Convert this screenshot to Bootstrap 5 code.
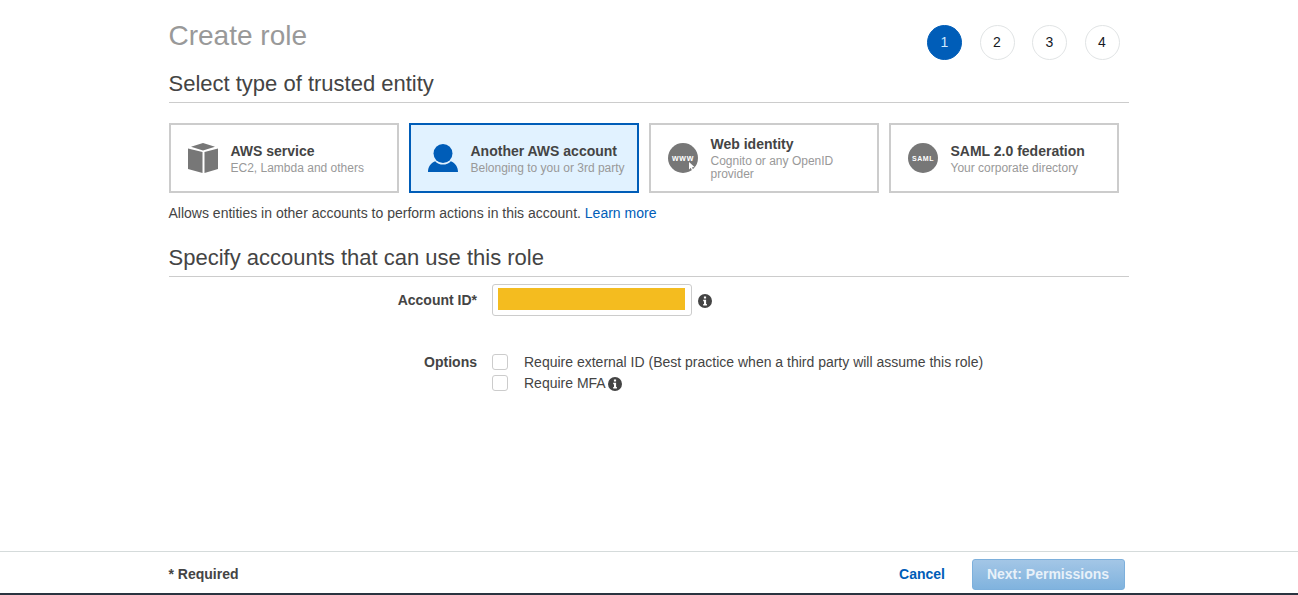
<!DOCTYPE html>
<html lang="en">
<head>
<meta charset="utf-8">
<title>Create role</title>
<link href="https://cdn.jsdelivr.net/npm/bootstrap@5.3.0/dist/css/bootstrap.min.css" rel="stylesheet">
<style>
html,body{height:100%}
body{font-family:"Liberation Sans",Arial,sans-serif;font-size:14px;color:#444;overflow:hidden;background:#fff}
.pg{height:595px}
.wrap{width:960px;margin:0 0 0 168.5px}
.hdr{height:70px;padding-top:16px}
.ttl{font-size:28px;line-height:40px;font-weight:400;color:#999;margin:0}
.stp{width:35px;height:35px;border:1px solid #e1e4e5;border-radius:50%;font-size:14px;color:#16191f;margin-top:9px}
.stp.on{background:#005db8;border-color:#005db8;color:#cfeaff}
.stps{padding-right:9px;gap:17.5px}
.sect{font-size:22px;line-height:28px;font-weight:400;color:#444;border-bottom:1px solid #ccc;margin:0;padding-bottom:4px}
.tiles{gap:10px;margin-top:20px}
.tile{width:230px;height:70px;border:2px solid #ccc;background:#fff;padding:0 10px 0 17px;gap:13px}
.tile.sel{border-color:#005db8;background:#e1f2ff}
.tile svg{flex:0 0 30px;width:30px;height:30px}
.tn{font-size:14px;line-height:17px;font-weight:700;color:#444}
.ts{font-size:12px;line-height:13px;color:#999;margin-top:2px}
.one{margin-top:2px}
.hint{line-height:20px;margin:10px 0 0}
.hint a,.lnk{color:#005db8;text-decoration:none}
.sect2{margin-top:21px}
.lab{width:308.500px;text-align:right;font-weight:700;color:#444;flex:none}
.frm{margin-top:7px;height:32px;gap:14.500px}
.idbox{width:200px;height:32px;border:1px solid #ccc;border-radius:3px;padding:3px 6px 5px 5px;background:#fff}
.mask{background:#f4bc1f;height:22px;width:187px}
.inf{width:14px;height:14px;flex:none}
.idwrap{gap:6px}
.idwrap .inf{margin-top:2px}
.opts{margin-top:36px;gap:14.500px}
.ck{width:16px;height:16px;border:1px solid #ccc;border-radius:3px;background:#fff;flex:none;margin-bottom:2px}
.ckrow{gap:16.500px;height:21px;line-height:21px}
.inf2{margin-left:2px}
.foot{border-top:1px solid #d5dbdb;border-bottom:2px solid #2a3440;height:44px;background:#fff}
.foot .wrap{height:45px}
.req{font-weight:700;color:#444}
.lnk{font-weight:700}
.nxt{width:153px;height:31px;border:1px solid #7db0dc;border-radius:3px;background:linear-gradient(#a3c6e6,#80b3de);color:#e8f1f9;font-weight:700;font-size:14px;padding:0;margin:0 4px 0 26.500px;opacity:1}
</style>
</head>
<body>
<div class="pg d-flex flex-column">
  <main class="flex-grow-1">
    <div class="wrap">
      <div class="hdr d-flex justify-content-between align-items-start">
        <h1 class="ttl">Create role</h1>
        <div class="d-flex stps">
          <span class="stp on d-flex align-items-center justify-content-center">1</span>
          <span class="stp d-flex align-items-center justify-content-center">2</span>
          <span class="stp d-flex align-items-center justify-content-center">3</span>
          <span class="stp d-flex align-items-center justify-content-center">4</span>
        </div>
      </div>
      <h2 class="sect">Select type of trusted entity</h2>
      <div class="tiles d-flex">
        <div class="tile d-flex align-items-center">
          <svg viewBox="0 0 30 30"><path fill="#777" d="M15 0 27 3.800 15 7.500 3 3.800zM0 5.500 14.500 9V30L0 26zM30 5.500 16.500 9V30L30 26z"/></svg>
          <div class="one"><div class="tn">AWS service</div><div class="ts">EC2, Lambda and others</div></div>
        </div>
        <div class="tile sel d-flex align-items-center">
          <svg viewBox="0 0 30 30"><circle cx="15" cy="10.500" r="9.500" fill="#005db8"/><path fill="#005db8" d="M0 29c0-5 2.500-9 7.200-10.800C9 20.500 12 21.600 15 21.600s6-1.100 7.800-3.400C27.500 20 30 24 30 29z"/></svg>
          <div class="one"><div class="tn">Another AWS account</div><div class="ts">Belonging to you or 3rd party</div></div>
        </div>
        <div class="tile d-flex align-items-center">
          <svg viewBox="0 0 30 30"><circle cx="15" cy="15" r="15" fill="#777"/><text x="15" y="17.500" text-anchor="middle" font-family="Liberation Sans,sans-serif" font-size="8.500" font-weight="700" letter-spacing=".8" fill="#fff">www</text><path fill="#fff" d="M21 19l5.500 5-2.500.3 1.200 2.700-1.200.5-1.200-2.700L21 26.500z"/></svg>
          <div><div class="tn">Web identity</div><div class="ts">Cognito or any OpenID provider</div></div>
        </div>
        <div class="tile d-flex align-items-center">
          <svg viewBox="0 0 30 30"><circle cx="15" cy="15" r="15" fill="#777"/><text x="15" y="17.800" text-anchor="middle" font-family="Liberation Sans,sans-serif" font-size="7" font-weight="700" letter-spacing=".5" fill="#fff">SAML</text></svg>
          <div class="one"><div class="tn">SAML 2.0 federation</div><div class="ts">Your corporate directory</div></div>
        </div>
      </div>
      <p class="hint">Allows entities in other accounts to perform actions in this account. <a href="#">Learn more</a></p>
      <h2 class="sect sect2">Specify accounts that can use this role</h2>
      <div class="frm d-flex align-items-center">
        <label class="lab">Account ID*</label>
        <div class="d-flex align-items-center idwrap">
          <div class="idbox"><div class="mask"></div></div>
          <svg class="inf" viewBox="0 0 14 14"><circle cx="7" cy="7" r="7" fill="#444"/><path fill="#fff" d="M5.900 2.500h2.200v2H5.900zM5.200 5.800h2.900v4.200h.8v1.500H5.200V10H6V7.300h-.8z"/></svg>
        </div>
      </div>
      <div class="opts d-flex">
        <div class="lab">Options</div>
        <div>
          <div class="ckrow d-flex align-items-center"><span class="ck"></span><span>Require external ID (Best practice when a third party will assume this role)</span></div>
          <div class="ckrow d-flex align-items-center"><span class="ck"></span><span class="d-flex align-items-center">Require MFA<svg class="inf inf2" viewBox="0 0 14 14"><circle cx="7" cy="7" r="7" fill="#444"/><path fill="#fff" d="M5.900 2.500h2.200v2H5.900zM5.200 5.800h2.900v4.200h.8v1.500H5.200V10H6V7.300h-.8z"/></svg></span></div>
        </div>
      </div>
    </div>
  </main>
  <footer class="foot flex-shrink-0">
    <div class="wrap d-flex align-items-center justify-content-between">
      <span class="req">* Required</span>
      <div class="d-flex align-items-center">
        <a href="#" class="lnk">Cancel</a>
        <button type="button" class="nxt" disabled>Next: Permissions</button>
      </div>
    </div>
  </footer>
</div>
<script src="https://cdn.jsdelivr.net/npm/bootstrap@5.3.0/dist/js/bootstrap.bundle.min.js"></script>
</body>
</html>
